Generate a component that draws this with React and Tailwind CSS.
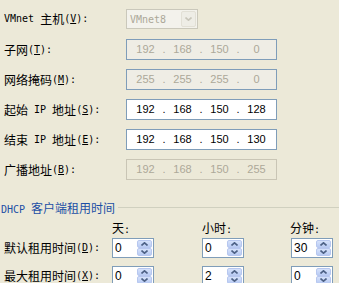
import React from "react";

const CJK = "font-['Noto_Sans_CJK_SC',sans-serif] text-[12px]";
const MONO = "font-['DejaVu_Sans_Mono',monospace] text-[10px]";

function M({ children }) {
  return <span className={MONO}>{children}</span>;
}
function C({ children }) {
  return <span className={CJK}>{children}</span>;
}

function Label({ children, w = "w-[126px]" }) {
  return (
    <div className={`${w} shrink-0 pl-[4px] flex items-center whitespace-pre text-black leading-none`}>
      {children}
    </div>
  );
}

function IpBox({ values, variant }) {
  const cls =
    variant === "enabled"
      ? "bg-white border-[#7f9db9] text-black"
      : variant === "disabled"
      ? "bg-[#efede5] border-[#7f9db9] text-[#aca899]"
      : "bg-[#ece9d8] border-[#c9c5b5] text-[#aca899]";
  return (
    <div
      className={`flex items-center w-[151px] h-[21px] border pl-[2px] font-['Liberation_Sans',sans-serif] text-[11px] ${cls}`}
    >
      {values.map((v, i) => (
        <React.Fragment key={i}>
          {i > 0 && <span className="w-[4px] text-center">.</span>}
          <span className="w-[33px] text-center">{v}</span>
        </React.Fragment>
      ))}
    </div>
  );
}

function Row({ label, children }) {
  return (
    <div className="flex items-center h-[21px]">
      <Label>{label}</Label>
      {children}
    </div>
  );
}

function Arrow({ up }) {
  return (
    <svg width="7" height="4" viewBox="0 0 7 4" className="block">
      {up ? (
        <polyline points="0.5,3.5 3.5,0.8 6.5,3.5" fill="none" stroke="#4d6185" strokeWidth="1.6" />
      ) : (
        <polyline points="0.5,0.5 3.5,3.2 6.5,0.5" fill="none" stroke="#4d6185" strokeWidth="1.6" />
      )}
    </svg>
  );
}

function SpinBtn({ up }) {
  return (
    <div className="flex-1 flex items-center justify-center rounded-[2px] border border-[#b7c7ef] bg-gradient-to-b from-[#d6e2fb] to-[#b9cbf3]">
      <Arrow up={up} />
    </div>
  );
}

function Spin({ value }) {
  return (
    <div className="flex w-[42px] h-[20px] border border-[#7f9db9] bg-white">
      <span className="flex-1 pl-[2px] leading-[18px] font-['Liberation_Sans',sans-serif] text-[12px] text-black">
        {value}
      </span>
      <div className="flex flex-col w-[16px] py-[1px] pr-[1px]">
        <SpinBtn up />
        <SpinBtn />
      </div>
    </div>
  );
}

export default function App() {
  return (
    <div className="w-[339px] h-[283px] overflow-hidden bg-[#ece9d8] text-black flex flex-col">
      {/* VMnet row */}
      <div className="flex items-center h-[20px] mt-[9px]">
        <Label>
          <M>VMnet </M>
          <C>主机</C>
          <M>
            (<u>V</u>):
          </M>
        </Label>
        <div className="flex items-center w-[72px] h-[20px] border border-[#cac8bb] bg-[#f3f2ec] pl-[3px] pr-[1px]">
          <span className={`${MONO} text-[#aca899] flex-1`}>VMnet8</span>
          <div className="w-[15px] h-[16px] flex items-center justify-center rounded-[2px] border border-[#e2e0d6] bg-[#eeede6]">
            <svg width="7" height="4" viewBox="0 0 7 4">
              <polyline points="0.5,0.5 3.5,3.2 6.5,0.5" fill="none" stroke="#c8c6ba" strokeWidth="1.6" />
            </svg>
          </div>
        </div>
      </div>

      <div className="flex flex-col gap-[9px] mt-[10px]">
        <Row
          label={
            <>
              <C>子网</C>
              <M>
                (<u>T</u>):
              </M>
            </>
          }
        >
          <IpBox values={["192", "168", "150", "0"]} variant="disabled" />
        </Row>
        <Row
          label={
            <>
              <C>网络掩码</C>
              <M>
                (<u>M</u>):
              </M>
            </>
          }
        >
          <IpBox values={["255", "255", "255", "0"]} variant="disabled" />
        </Row>
        <Row
          label={
            <>
              <C>起始</C>
              <M> IP </M>
              <C>地址</C>
              <M>
                (<u>S</u>):
              </M>
            </>
          }
        >
          <IpBox values={["192", "168", "150", "128"]} variant="enabled" />
        </Row>
        <Row
          label={
            <>
              <C>结束</C>
              <M> IP </M>
              <C>地址</C>
              <M>
                (<u>E</u>):
              </M>
            </>
          }
        >
          <IpBox values={["192", "168", "150", "130"]} variant="enabled" />
        </Row>
        <Row
          label={
            <>
              <C>广播地址</C>
              <M>
                (<u>B</u>):
              </M>
            </>
          }
        >
          <IpBox values={["192", "168", "150", "255"]} variant="gray" />
        </Row>
      </div>

      {/* separator */}
      <div className="mt-[14px] h-px bg-[#d0cfbf]" />
      <div className="h-px bg-white" />

      {/* group title */}
      <div className="flex items-center mt-[7px] h-[12px]">
        <span className="pl-[1px] whitespace-pre text-[#1c4fa5] leading-none">
          <M>DHCP </M>
          <C>客户端租用时间</C>
        </span>
        <div className="flex-1 ml-[3px] h-px bg-[#d0d0bf]" />
      </div>

      {/* column headers */}
      <div className="flex items-center h-[12px] mt-[8px] leading-none">
        <div className="w-[112px] shrink-0" />
        <div className="w-[90px] shrink-0 whitespace-pre">
          <C>天</C>
          <M>:</M>
        </div>
        <div className="w-[88px] shrink-0 whitespace-pre">
          <C>小时</C>
          <M>:</M>
        </div>
        <div className="whitespace-pre">
          <C>分钟</C>
          <M>:</M>
        </div>
      </div>

      <div className="flex flex-col gap-[8px] mt-[5px]">
        <div className="flex items-center h-[20px]">
          <Label w="w-[112px]">
            <C>默认租用时间</C>
            <M>
              (<u>D</u>):
            </M>
          </Label>
          <div className="w-[90px] shrink-0">
            <Spin value="0" />
          </div>
          <div className="w-[89px] shrink-0">
            <Spin value="0" />
          </div>
          <Spin value="30" />
        </div>
        <div className="flex items-center h-[20px]">
          <Label w="w-[112px]">
            <C>最大租用时间</C>
            <M>
              (<u>X</u>):
            </M>
          </Label>
          <div className="w-[90px] shrink-0">
            <Spin value="0" />
          </div>
          <div className="w-[89px] shrink-0">
            <Spin value="2" />
          </div>
          <Spin value="0" />
        </div>
      </div>
    </div>
  );
}
